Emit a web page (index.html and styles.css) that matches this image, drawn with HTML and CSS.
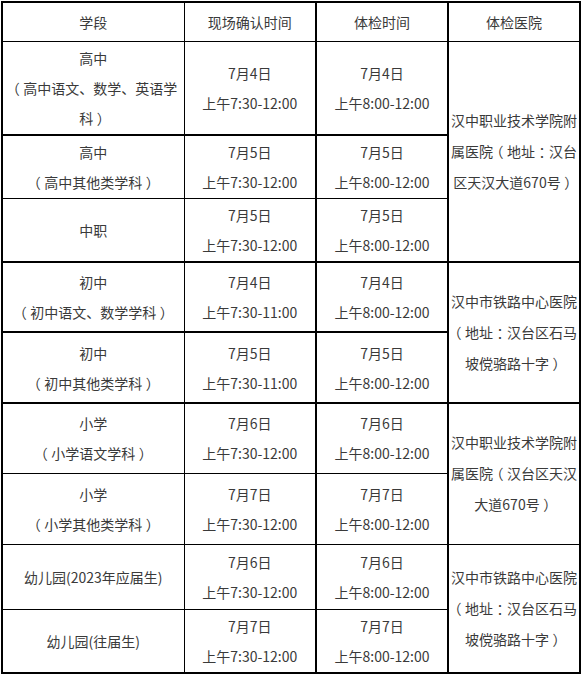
FILE: index.html
```html
<!DOCTYPE html>
<html lang="zh-CN">
<head>
<meta charset="utf-8">
<title>体检安排</title>
<link rel="stylesheet" href="styles.css">
</head>
<body>
<table class="sched">
  <colgroup>
    <col class="c1"><col class="c2"><col class="c3"><col class="c4">
  </colgroup>
  <tr class="r-head">
    <td>学段</td>
    <td class="mid">现场确认时间</td>
    <td class="mid">体检时间</td>
    <td>体检医院</td>
  </tr>
  <tr class="r1 thick">
    <td class="stage">高中<br><span class="fw">（</span>高中语文、数学、英语学科<span class="fw">）</span></td>
    <td class="mid">7月4日<br>上午7:30-12:00</td>
    <td class="mid">7月4日<br>上午8:00-12:00</td>
    <td class="hosp thick" rowspan="3">汉中职业技术学院附属医院<span class="fw">（</span>地址<span class="fw">：</span>汉台区天汉大道670号<span class="fw">）</span></td>
  </tr>
  <tr class="r2">
    <td class="stage">高中<br><span class="fw">（</span>高中其他类学科<span class="fw">）</span></td>
    <td class="mid">7月5日<br>上午7:30-12:00</td>
    <td class="mid">7月5日<br>上午8:00-12:00</td>
  </tr>
  <tr class="r3 thick">
    <td class="stage">中职</td>
    <td class="mid">7月5日<br>上午7:30-12:00</td>
    <td class="mid">7月5日<br>上午8:00-12:00</td>
  </tr>
  <tr class="r4 thick">
    <td class="stage">初中<br><span class="fw">（</span>初中语文、数学学科<span class="fw">）</span></td>
    <td class="mid">7月4日<br>上午7:30-11:00</td>
    <td class="mid">7月4日<br>上午8:00-12:00</td>
    <td class="hosp thick" rowspan="2">汉中市铁路中心医院<span class="fw">（</span>地址<span class="fw">：</span>汉台区石马坡傥骆路十字<span class="fw">）</span></td>
  </tr>
  <tr class="r5 thick">
    <td class="stage">初中<br><span class="fw">（</span>初中其他类学科<span class="fw">）</span></td>
    <td class="mid">7月5日<br>上午7:30-11:00</td>
    <td class="mid">7月5日<br>上午8:00-12:00</td>
  </tr>
  <tr class="r6">
    <td class="stage">小学<br><span class="fw">（</span>小学语文学科<span class="fw">）</span></td>
    <td class="mid">7月6日<br>上午7:30-12:00</td>
    <td class="mid">7月6日<br>上午8:00-12:00</td>
    <td class="hosp" rowspan="2">汉中职业技术学院附属医院<span class="fw">（</span>汉台区天汉大道670号<span class="fw">）</span></td>
  </tr>
  <tr class="r7">
    <td class="stage">小学<br><span class="fw">（</span>小学其他类学科<span class="fw">）</span></td>
    <td class="mid">7月7日<br>上午7:30-12:00</td>
    <td class="mid">7月7日<br>上午8:00-12:00</td>
  </tr>
  <tr class="r8">
    <td class="stage">幼儿园(2023年应届生)</td>
    <td class="mid">7月6日<br>上午7:30-12:00</td>
    <td class="mid">7月6日<br>上午8:00-12:00</td>
    <td class="hosp" rowspan="2">汉中市铁路中心医院<span class="fw">（</span>地址<span class="fw">：</span>汉台区石马坡傥骆路十字<span class="fw">）</span></td>
  </tr>
  <tr class="r9">
    <td class="stage">幼儿园(往届生)</td>
    <td class="mid">7月7日<br>上午7:30-12:00</td>
    <td class="mid">7月7日<br>上午8:00-12:00</td>
  </tr>
</table>
</body>
</html>
```

FILE: styles.css
```css
html, body {
  margin: 0;
  padding: 0;
  background: #ffffff;
}
body {
  padding: 1px 0 0 1px;
}
.sched {
  border-collapse: collapse;
  table-layout: fixed;
  width: 580px;
  border: 2px solid #000;
  font-family: "Noto Sans CJK SC", "Microsoft YaHei", sans-serif;
  font-size: 14px;
  color: #3a3a3a;
}
.c1 { width: 182px; }
.c2 { width: 132px; }
.c3 { width: 132px; }
.c4 { width: 132px; }
.sched td {
  border: 1px solid #000;
  text-align: center;
  vertical-align: middle;
  line-height: 30px;
  padding: 0 6px;
}
.sched td.mid {
  border-right: 2px solid #000;
  padding: 0 4px;
}
.sched td.hosp {
  padding: 0 1px;
  line-height: 31px;
}
.sched tr.thick td {
  border-bottom: 2px solid #000;
}
.sched td.hosp.thick {
  border-bottom: 2px solid #000;
}
.fw {
  padding: 0 3.5px;
  font-feature-settings: "halt" 1;
}
.r-head { height: 39px; }
.r1 { height: 94px; }
.r2 { height: 63px; }
.r3 { height: 64px; }
.r4 { height: 70px; }
.r5 { height: 71px; }
.r6 { height: 70px; }
.r7 { height: 71px; }
.r8 { height: 65px; }
.r9 { height: 64px; }
```
